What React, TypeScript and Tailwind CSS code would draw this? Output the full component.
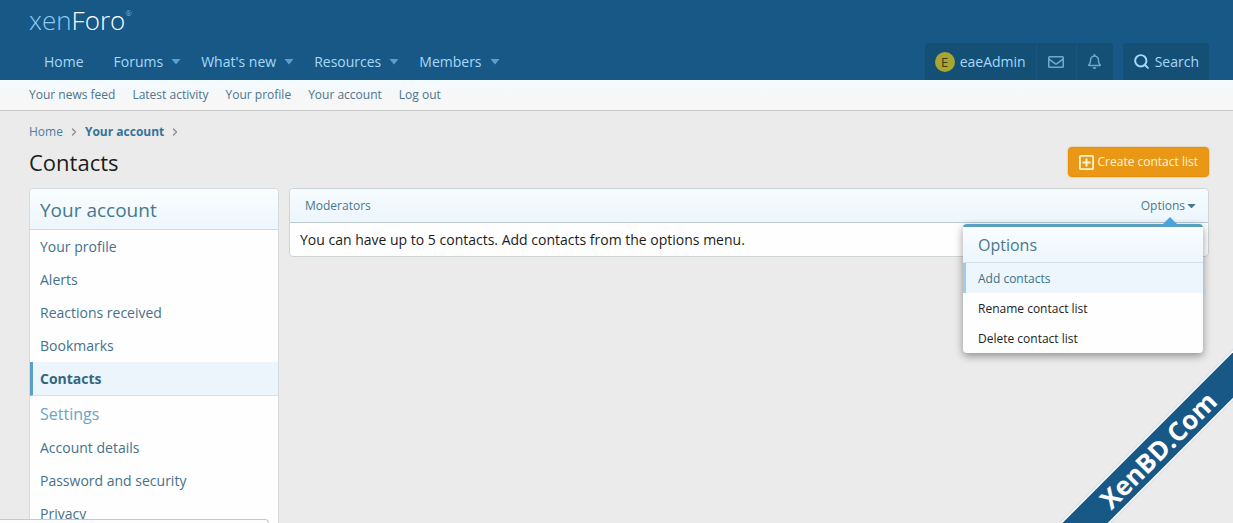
import { FaCaretDown, FaRegBell } from 'react-icons/fa'
import { ChevronRight, Search } from 'lucide-react'

const navItems = ['Home', 'Forums', "What's new", 'Resources', 'Members']

const subNavItems = ['Your news feed', 'Latest activity', 'Your profile', 'Your account', 'Log out']

const accountLinks = ['Your profile', 'Alerts', 'Reactions received', 'Bookmarks', 'Contacts']

const settingsLinks = ['Account details', 'Password and security', 'Privacy']

const menuActions = ['Add contacts', 'Rename contact list', 'Delete contact list']

function EnvelopeIcon() {
  return (
    <svg viewBox="0 0 16 12" className="w-4 h-3" fill="none" stroke="currentColor" strokeWidth="1.6">
      <rect x="0.8" y="0.8" width="14.4" height="10.4" rx="0.8" />
      <path d="M1 3.2 L7 7.6 Q8 8.3 9 7.6 L15 3.2" />
    </svg>
  )
}

function PlusSquareIcon() {
  return (
    <svg viewBox="0 0 15 15" className="w-[15px] h-[15px]" fill="none" stroke="currentColor" strokeWidth="1.8">
      <rect x="0.9" y="0.9" width="13.2" height="13.2" rx="0.8" />
      <path d="M7.5 3.4 V11.6 M3.4 7.5 H11.6" strokeWidth="2" />
    </svg>
  )
}

function Header() {
  return (
    <header className="bg-[#185886] pl-[29px] pr-6">
      <div className="h-[43px] pt-[2px]">
        <a href="#" className="inline-flex items-start text-[26px] leading-9 font-light text-[#8ccaf5]">
          <span>xen</span>
          <span className="text-white">Foro</span>
          <span className="text-[8px] leading-[22px]">®</span>
        </a>
      </div>

      <div className="flex justify-between">
        <nav className="flex h-[37px] text-[14px] text-[#a5d8fa]">
          {navItems.map((item) => (
            <div key={item} className="flex items-center">
              <a href="#" className={item === 'Home' ? 'px-[15px]' : 'pl-[15px] pr-2'}>{item}</a>
              {item !== 'Home' && (
                <button aria-label={`Open ${item}`} className="mr-[5px] w-[10px]">
                  <svg viewBox="0 0 10 6" className="w-[10px] h-[6px]" fill="#5c9fce">
                    <path d="M0.5 0 H9.5 L5 5.5 Z" />
                  </svg>
                </button>
              )}
            </div>
          ))}
        </nav>

        {/* Visitor tabs and search */}
        <div className="flex gap-[10px] h-[37px] text-[14px] text-[#a5d8fa]">
          <div className="flex bg-[#144f76] rounded-t-sm">
            <a href="#" className="flex items-center gap-[5px] px-[10px] border-r border-[#1a567f]">
              <span className="w-5 h-5 rounded-full bg-[#a8a632] text-[#3b3a12] text-[13px] leading-5 text-center">E</span>
              eaeAdmin
            </a>
            <button aria-label="Inbox" className="w-10 flex items-center justify-center border-r border-[#1a567f] text-[#6fa9d2]">
              <EnvelopeIcon />
            </button>
            <button aria-label="Alerts" className="w-9 flex items-center justify-center text-[#6fa9d2]">
              <FaRegBell size={15} />
            </button>
          </div>
          <button className="flex items-center gap-[5px] px-[10px] bg-[#144f76] rounded-t-sm">
            <Search size={17} strokeWidth={2.8} />
            Search
          </button>
        </div>
      </div>
    </header>
  )
}

function Sidebar() {
  return (
    <aside className="w-[250px] shrink-0 bg-[#fefefe] border border-[#d4dadd] rounded text-[14px] text-[#47718a]">
      <h2 className="h-[41px] px-[10px] leading-[42px] text-[19px] border-b border-[#c9dce6] rounded-t bg-gradient-to-b from-[#f9fdfe] to-[#edf6fd] text-[#47788f]">
        Your account
      </h2>
      <ul>
        {accountLinks.map((link) => (
          <li key={link}>
            <a
              href="#"
              className={
                link === 'Contacts'
                  ? 'block h-[34px] leading-[33px] pl-[7px] border-l-[3px] border-l-[#5a9fc6] border-b border-b-[#d3e1e8] bg-[#edf5fc] font-bold text-[#34677f]'
                  : 'block h-[33px] leading-[33px] px-[10px]'
              }
            >
              {link}
            </a>
          </li>
        ))}
      </ul>
      <h3 className="h-[35px] leading-9 px-[10px] text-[16px] text-[#6ea3c4]">Settings</h3>
      <ul>
        {settingsLinks.map((link) => (
          <li key={link}>
            <a href="#" className="block h-[33px] leading-[33px] px-[10px]">{link}</a>
          </li>
        ))}
      </ul>
    </aside>
  )
}

function OptionsMenu() {
  return (
    <div className="absolute top-full right-[5px] mt-[2px] w-60 z-10 bg-[#fefefe] border-t-[3px] border-[#5a9fc0] rounded shadow-[0_3px_8px_rgba(0,0,0,0.4)]">
      <svg viewBox="0 0 16 8" className="absolute -top-[10px] right-[25px] w-4 h-2" fill="#4ba3dc">
        <path d="M0 8 L8 0 L16 8 Z" />
      </svg>
      <h3 className="h-9 leading-9 px-[15px] text-[16px] text-[#47788f] border-b border-[#d3e1e8] bg-gradient-to-b from-[#f9fdfe] to-[#edf6fd]">
        Options
      </h3>
      {menuActions.map((action, i) => (
        <a
          key={action}
          href="#"
          className={
            i === 0
              ? 'block h-[30px] leading-[31px] pl-3 border-l-[3px] border-[#a3cbe5] bg-[#edf5fd] text-[12px] text-[#3c7284]'
              : 'block h-[30px] leading-[31px] px-[15px] text-[12px] text-[#222]'
          }
        >
          {action}
        </a>
      ))}
    </div>
  )
}

export default function App() {
  return (
    <div className="relative h-screen overflow-hidden bg-[#ebebeb] font-['Open_Sans','Noto_Sans',sans-serif] text-[#1c1c1c]">
      <Header />

      <nav className="flex items-center gap-[17px] h-[31px] pl-[29px] pr-6 bg-gradient-to-b from-[#f2fbff] to-[#f7f7f7] to-50% border-b border-[#c9c9c9] text-[12px] leading-5 text-[#4a7590]">
        {subNavItems.map((item) => (
          <a key={item} href="#">{item}</a>
        ))}
      </nav>

      <main className="pl-[29px] pr-6 pt-[11px]">
        <nav className="flex items-center gap-[5px] h-5 text-[12px] text-[#4a7f9f]">
          <a href="#">Home</a>
          <ChevronRight size={12} strokeWidth={2.5} className="text-[#8a8a8a]" />
          <a href="#" className="font-bold text-[#35729a]">Your account</a>
          <ChevronRight size={12} strokeWidth={2.5} className="text-[#8a8a8a]" />
        </nav>

        <div className="flex items-center justify-between mt-[5px] h-[30px]">
          <h1 className="text-[22px]">Contacts</h1>
          <button className="flex items-center gap-1 h-[30px] px-[10px] rounded bg-[#ea9715] border border-[#e59110] text-[12px] text-[#fff6cf] shadow-[0_0_2px_#d9a85a]">
            <PlusSquareIcon />
            Create contact list
          </button>
        </div>

        <div className="flex items-start gap-[10px] mt-[11px]">
          <Sidebar />
          <section className="flex-1 bg-[#fefefe] border border-[#cfd4d6] rounded">
            <div className="relative flex items-center justify-between h-[34px] pl-[15px] pr-[10px] rounded-t bg-gradient-to-b from-[#f6fcfe] to-[#edf6fd] border-b border-[#bfcacf] text-[12px] text-[#47788f]">
              <h2>Moderators</h2>
              <button className="flex items-center">
                Options
                <FaCaretDown size={13} />
              </button>
              <OptionsMenu />
            </div>
            <p className="h-[33px] leading-[34px] px-[10px] text-[14px]">
              You can have up to 5 contacts. Add contacts from the options menu.
            </p>
          </section>
        </div>
      </main>

      {/* Corner ribbon */}
      <div className="absolute -right-[75px] bottom-[55px] w-[300px] h-9 -rotate-45 flex items-center justify-center bg-[#185886] border-y-2 border-white text-white text-[26px] font-bold">
        XenBD.Com
      </div>

      <div className="absolute left-0 bottom-0 w-[269px] h-1 rounded-tr border-t border-r border-[#c8c8c8] bg-[#fdfdfd]" />
    </div>
  )
}
